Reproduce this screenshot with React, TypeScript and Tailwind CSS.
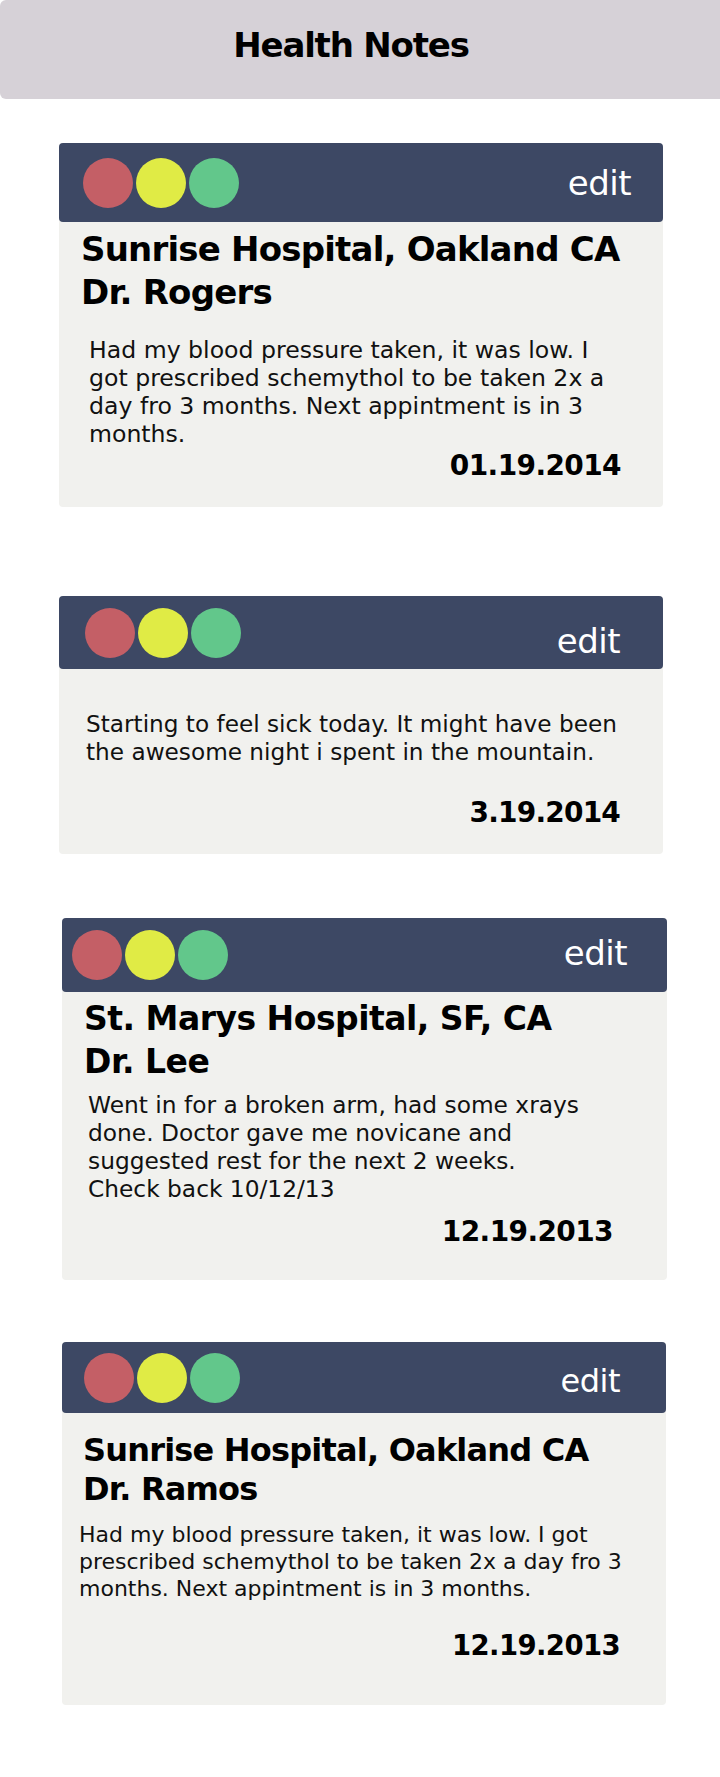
import React from 'react'

type Note = {
  wrap: string
  bar: string
  edit: string
  title?: string[]
  titleCls?: string
  body: React.ReactNode
  bodyCls: string
  date: string
  dateCls: string
}

const notes: Note[] = [
  {
    wrap: 'mt-[44px] ml-[59px] w-[604px] pb-[25px]',
    bar: 'h-[79px] pl-[24px] pr-[32px]',
    edit: 'text-[34px]',
    title: ['Sunrise Hospital, Oakland CA', 'Dr. Rogers'],
    titleCls: 'pl-[22px] pt-[6px] text-[34px] leading-[43px] tracking-[-0.8px]',
    body: 'Had my blood pressure taken, it was low. I got prescribed schemythol to be taken 2x a day fro 3 months. Next appintment is in 3 months.',
    bodyCls: 'mt-[22px] pl-[30px] pr-[34px] text-[23.6px] leading-[28px]',
    date: '01.19.2014',
    dateCls: 'mt-[2px] pr-[42px] text-[28px] leading-[32px] tracking-[-0.6px]',
  },
  {
    wrap: 'mt-[89px] ml-[59px] w-[604px] pb-[25px]',
    bar: 'h-[73px] pl-[26px] pr-[43px]',
    edit: 'text-[34px] mt-[16px]',
    body: 'Starting to feel sick today. It might have been the awesome night i spent in the mountain.',
    bodyCls: 'mt-[41px] pl-[27px] pr-[30px] text-[23.2px] leading-[27.5px]',
    date: '3.19.2014',
    dateCls: 'mt-[32px] pr-[43px] text-[28px] leading-[32px] tracking-[-0.8px]',
  },
  {
    wrap: 'mt-[64px] ml-[62px] w-[605px] pb-[32px]',
    bar: 'h-[74px] pl-[10px] pr-[40px]',
    edit: 'text-[34px] mt-[-4px]',
    title: ['St. Marys Hospital, SF, CA', 'Dr. Lee'],
    titleCls: 'pl-[22px] pt-[5px] text-[33px] leading-[43px] tracking-[-0.5px]',
    body: (
      <>
        Went in for a broken arm, had some xrays done. Doctor gave me novicane and suggested rest for the next 2 weeks.
        <br />
        Check back 10/12/13
      </>
    ),
    bodyCls: 'mt-[8px] pl-[26px] pr-[55px] text-[23.3px] leading-[28px]',
    date: '12.19.2013',
    dateCls: 'mt-[13px] pr-[54px] text-[28px] leading-[32px] tracking-[-0.6px]',
  },
  {
    wrap: 'mt-[62px] ml-[62px] w-[604px] pb-[44px]',
    bar: 'h-[71px] pl-[22px] pr-[46px]',
    edit: 'text-[32px] mt-[6px]',
    title: ['Sunrise Hospital, Oakland CA', 'Dr. Ramos'],
    titleCls: 'pl-[21px] pt-[18px] text-[32px] leading-[38.5px] tracking-[-0.8px]',
    body: 'Had my blood pressure taken, it was low. I got prescribed schemythol to be taken 2x a day fro 3 months. Next appintment is in 3 months.',
    bodyCls: 'mt-[13px] pl-[17px] pr-[36px] text-[22px] leading-[27px]',
    date: '12.19.2013',
    dateCls: 'mt-[28px] pr-[46px] text-[27.5px] leading-[31px] tracking-[-0.6px]',
  },
]

const NoteCard = ({ note }: { note: Note }) => (
  <div className={note.wrap + ' bg-[#f1f1ee] rounded-[4px]'}>
    {/* top bar */}
    <div className={note.bar + ' flex items-center justify-between bg-[#3d4864] rounded-[4px]'}>
      <div className="flex gap-[3px]">
        <span className="w-[50px] h-[50px] rounded-full bg-[#c45f66]" />
        <span className="w-[50px] h-[50px] rounded-full bg-[#e0eb45]" />
        <span className="w-[50px] h-[50px] rounded-full bg-[#62c78b]" />
      </div>
      <span className={note.edit + ' text-white tracking-[-0.5px] leading-[normal]'}>edit</span>
    </div>

    {note.title && (
      <div className={note.titleCls + ' font-bold text-black'}>
        {note.title.map((t) => (
          <div key={t}>{t}</div>
        ))}
      </div>
    )}

    <p className={note.bodyCls + ' text-[#111]'}>{note.body}</p>

    <div className={note.dateCls + ' text-right font-bold text-black'}>{note.date}</div>
  </div>
)

export default function App() {
  return (
    <div className="min-h-screen bg-white pb-[72px] font-['DejaVu_Sans',sans-serif]">
      {/* Header */}
      <header className="h-[99px] bg-[#d6d1d7] rounded-l-[6px] pt-[25px] pr-[18px] text-center">
        <h1 className="text-[34px] leading-[40px] font-bold tracking-[-1.2px] text-black">Health Notes</h1>
      </header>

      {notes.map((n, i) => (
        <NoteCard key={i} note={n} />
      ))}
    </div>
  )
}
